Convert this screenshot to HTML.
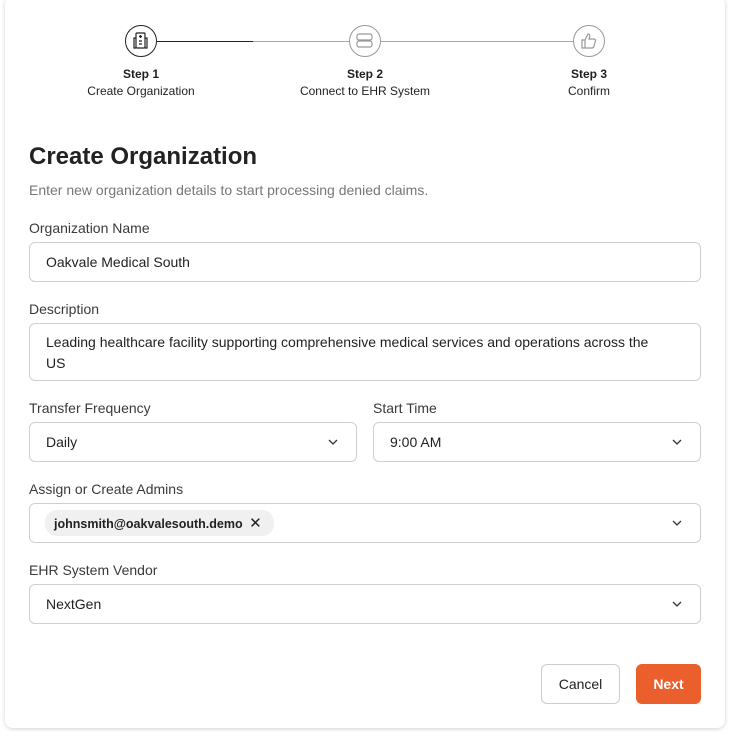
<!DOCTYPE html>
<html><head><style>
*{box-sizing:border-box;margin:0;padding:0}
body{width:730px;height:737px;background:#fff;font-family:"Liberation Sans",Arial,sans-serif;color:#1f1f1f;position:relative;overflow:hidden}
.card{position:absolute;left:5px;top:-4px;width:720px;height:732px;background:#fff;border-radius:8px;box-shadow:0 1px 4px rgba(0,0,0,.18)}
.a{position:absolute}
.c{position:absolute;width:32px;height:32px;border-radius:50%;background:#fff;top:25px}
.sl{position:absolute;width:200px;text-align:center;font-size:12px}
.lbl{position:absolute;left:29px;font-size:14px;color:#3a3a3a}
.in{position:absolute;border:1px solid #cfcfcf;border-radius:6px;font-size:14px;color:#1f1f1f;padding-left:16px;display:flex;align-items:center}
.chev{position:absolute;right:18px;top:50%;margin-top:-5px}
</style></head><body>
<div class="card"></div>
<div class="a" style="left:157px;top:41px;width:96px;height:1px;background:#222"></div>
<div class="a" style="left:253px;top:41px;width:320px;height:1px;background:#aaa"></div>
<div class="c" style="left:125px;border:1.5px solid #222">
<svg width="29" height="29" viewBox="0 0 29 29" fill="none" stroke="#222" stroke-width="1.2"><rect x="10" y="7" width="9" height="15" rx="1"/><path d="M10 12H8v10h2M19 12h2v10h-2M14.5 9v3M13 10.5h3M13 15h3M13 18h3"/></svg></div>
<div class="c" style="left:349px;border:1.5px solid #999">
<svg width="29" height="29" viewBox="0 0 29 29" fill="none" stroke="#999" stroke-width="1.2"><rect x="7" y="8" width="15" height="6" rx="2"/><rect x="7" y="15" width="15" height="6" rx="2"/></svg></div>
<div class="c" style="left:573px;border:1.5px solid #999">
<svg width="29" height="29" viewBox="0 0 29 29" fill="none" stroke="#999" stroke-width="1.2"><path d="M8 14h3v8H8zM11 14l3-6c1.5 0 2 1 1.7 2.5L15 13h5c1 0 1.7 1 1.4 2l-1.5 5.5c-.2.9-1 1.5-2 1.5H11"/></svg></div>
<div class="sl" style="left:41px;top:67px"><b>Step 1</b><br><span style="line-height:20px">Create Organization</span></div>
<div class="sl" style="left:265px;top:67px"><b>Step 2</b><br><span style="line-height:20px">Connect to EHR System</span></div>
<div class="sl" style="left:489px;top:67px"><b>Step 3</b><br><span style="line-height:20px">Confirm</span></div>
<div class="a" style="left:29px;top:143px;font-size:24px;font-weight:bold;color:#222">Create Organization</div>
<div class="a" style="left:29px;top:182px;font-size:14px;color:#777">Enter new organization details to start processing denied claims.</div>
<div class="lbl" style="top:220px">Organization Name</div>
<div class="in" style="left:29px;top:242px;width:672px;height:40px">Oakvale Medical South</div>
<div class="lbl" style="top:301px">Description</div>
<div class="in" style="left:29px;top:323px;width:672px;height:58px;line-height:21px;padding-right:40px;align-items:flex-start;padding-top:8px">Leading healthcare facility supporting comprehensive medical services and operations across the US</div>
<div class="lbl" style="top:400px">Transfer Frequency</div>
<div class="lbl" style="top:400px;left:373px">Start Time</div>
<div class="in" style="left:29px;top:422px;width:328px;height:40px">Daily<svg class="chev" width="10" height="10" viewBox="0 0 10 10"><path d="M1 3l4 4 4-4" fill="none" stroke="#333" stroke-width="1.3"/></svg></div>
<div class="in" style="left:373px;top:422px;width:328px;height:40px">9:00 AM<svg class="chev" width="10" height="10" viewBox="0 0 10 10"><path d="M1 3l4 4 4-4" fill="none" stroke="#333" stroke-width="1.3"/></svg></div>
<div class="lbl" style="top:481px">Assign or Create Admins</div>
<div class="in" style="left:29px;top:503px;width:672px;height:40px;padding-left:15px"><span style="background:#f0f0f0;border-radius:12px;padding:4px 12px 4px 9px;font-size:12.5px;font-weight:bold;color:#222">johnsmith@oakvalesouth.demo <span style="font-weight:normal;font-size:15px;margin-left:3px">✕</span></span><svg class="chev" width="10" height="10" viewBox="0 0 10 10"><path d="M1 3l4 4 4-4" fill="none" stroke="#333" stroke-width="1.3"/></svg></div>
<div class="lbl" style="top:562px">EHR System Vendor</div>
<div class="in" style="left:29px;top:584px;width:672px;height:40px">NextGen<svg class="chev" width="10" height="10" viewBox="0 0 10 10"><path d="M1 3l4 4 4-4" fill="none" stroke="#333" stroke-width="1.3"/></svg></div>
<div class="a" style="left:541px;top:664px;width:79px;height:40px;border:1px solid #ccc;border-radius:6px;font-size:14px;display:flex;align-items:center;justify-content:center">Cancel</div>
<div class="a" style="left:636px;top:664px;width:65px;height:40px;background:#ea5f2c;border-radius:6px;color:#fff;font-weight:bold;font-size:14px;display:flex;align-items:center;justify-content:center">Next</div>
</body></html>
